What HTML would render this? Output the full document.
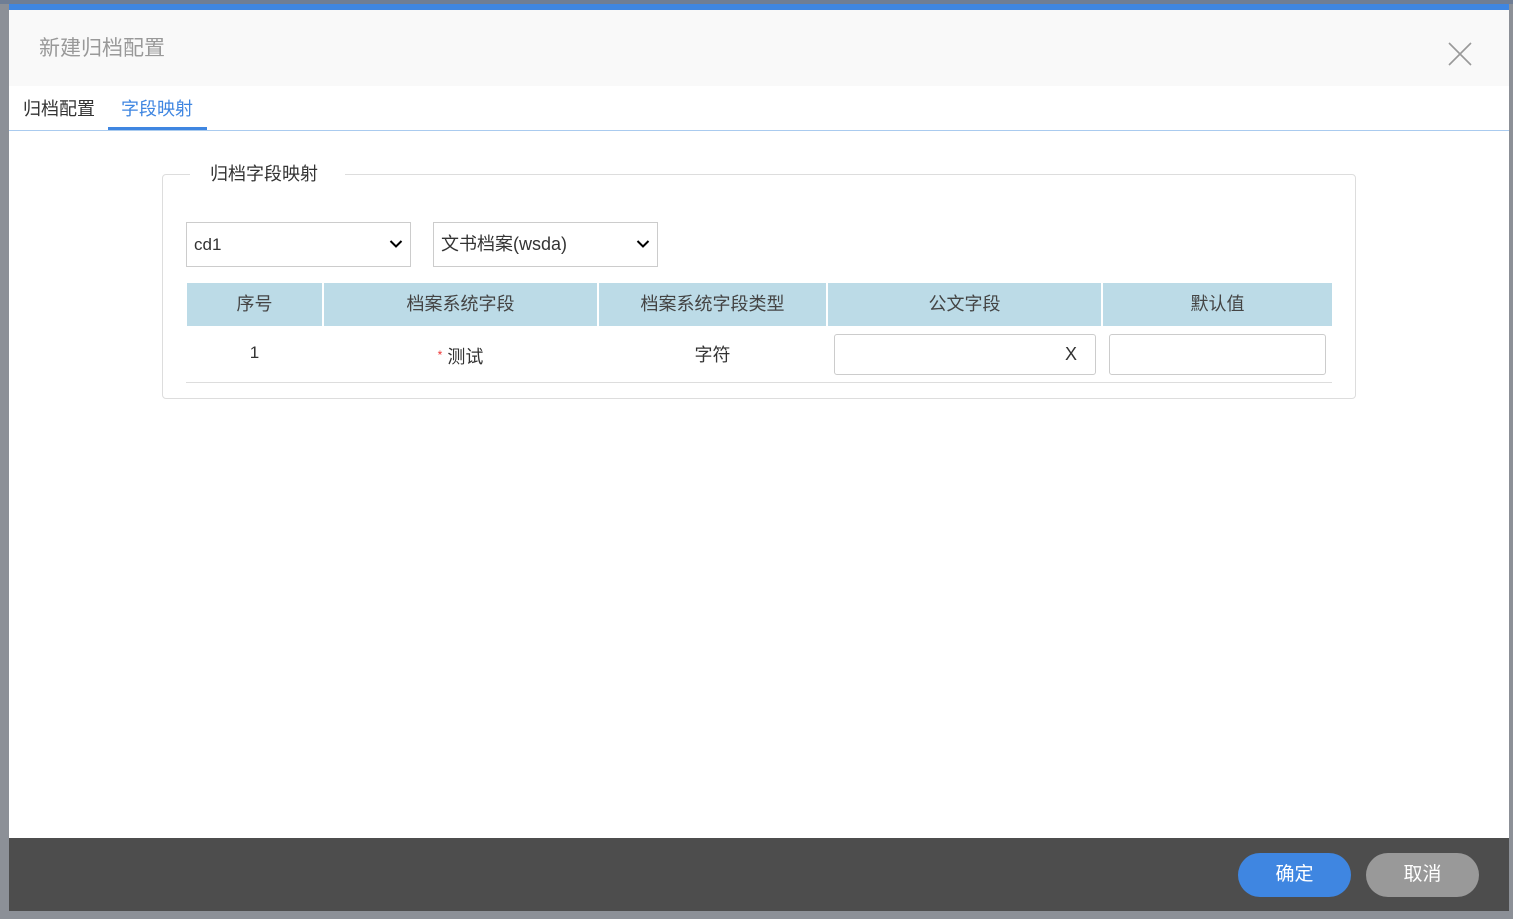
<!DOCTYPE html>
<html><head><meta charset="utf-8"><style>
*{box-sizing:border-box;margin:0;padding:0}
body{width:1513px;height:919px;background:#8c9097;position:relative;overflow:hidden;font-family:"Liberation Sans","Noto Sans CJK SC",sans-serif;color:#333}
.a{position:absolute}
.dlg{left:9px;top:4px;width:1500px;height:907px;background:#fff}
.top{left:0;top:0;width:1500px;height:6px;background:#3f86e1}
.hd{left:0;top:6px;width:1500px;height:76px;background:#f9f9f9}
.ttl{left:30px;top:31px;font-size:21px;color:#999;line-height:28px}
.tab{font-size:18px;top:96px;line-height:26px}
.sel{height:45px;border:1px solid #ccc;font-size:17px;padding:0 0 0 7px;line-height:43px;background:#fff}
.th{top:283px;height:43px;background:#bcdbe7;font-size:18px;text-align:center;line-height:43px;color:#444}
.td{top:341px;font-size:18px;line-height:28px;text-align:center;color:#333}
.inp{top:334px;height:41px;border:1px solid #ccc;border-radius:3px;background:#fff}
.btn{top:853px;height:44px;width:113px;border-radius:22px;color:#fff;font-size:19px;text-align:center;line-height:44px}
</style></head><body>
<div class="a" style="left:0;top:0;width:1513px;height:4px;background:#6f7e95"></div>
<div class="a dlg">
<div class="a top"></div>
<div class="a hd"></div>
<div class="a ttl">新建归档配置</div>
<svg class="a" style="left:1438px;top:37px" width="26" height="26"><path d="M2 2L24 24M24 2L2 24" stroke="#999" stroke-width="1.6"/></svg>
</div>
<div class="a tab" style="left:23px;color:#333">归档配置</div>
<div class="a tab" style="left:121px;color:#3f86e1">字段映射</div>
<div class="a" style="left:108px;top:127px;width:99px;height:3px;background:#3f86e1"></div>
<div class="a" style="left:9px;top:130px;width:1500px;height:1px;background:#aacbef"></div>
<div class="a" style="left:162px;top:174px;width:1194px;height:225px;border:1px solid #ddd;border-radius:4px"></div>
<div class="a" style="left:190px;top:161px;width:155px;height:26px;background:#fff;font-size:18px;line-height:26px;padding:0 0 0 20px">归档字段映射</div>
<div class="a sel" style="left:186px;top:222px;width:225px">cd1</div>
<div class="a sel" style="left:433px;top:222px;width:225px;font-size:18px">文书档案(wsda)</div>
<svg class="a" style="left:389px;top:239px" width="14" height="10"><path d="M1.5 2L7 7.5L12.5 2" stroke="#000" stroke-width="2" fill="none"/></svg>
<svg class="a" style="left:636px;top:239px" width="14" height="10"><path d="M1.5 2L7 7.5L12.5 2" stroke="#000" stroke-width="2" fill="none"/></svg>
<div class="a th" style="left:187px;width:135px">序号</div>
<div class="a th" style="left:324px;width:273px">档案系统字段</div>
<div class="a th" style="left:599px;width:227px">档案系统字段类型</div>
<div class="a th" style="left:828px;width:273px">公文字段</div>
<div class="a th" style="left:1103px;width:229px">默认值</div>
<div class="a td" style="left:187px;width:135px;top:339px;font-size:17px">1</div>
<div class="a td" style="left:324px;width:273px"><span style="color:#e33;font-size:12px;vertical-align:4px">*</span> 测试</div>
<div class="a td" style="left:599px;width:227px">字符</div>
<div class="a inp" style="left:834px;width:262px"><span class="a" style="left:230px;top:9px;font-size:18px;color:#333">X</span></div>
<div class="a inp" style="left:1109px;width:217px"></div>
<div class="a" style="left:186px;top:382px;width:1146px;height:1px;background:#ddd"></div>
<div class="a" style="left:9px;top:838px;width:1500px;height:73px;background:#4d4d4d"></div>
<div class="a btn" style="left:1238px;background:#3f86e1">确定</div>
<div class="a btn" style="left:1366px;background:#999">取消</div>
</body></html>
